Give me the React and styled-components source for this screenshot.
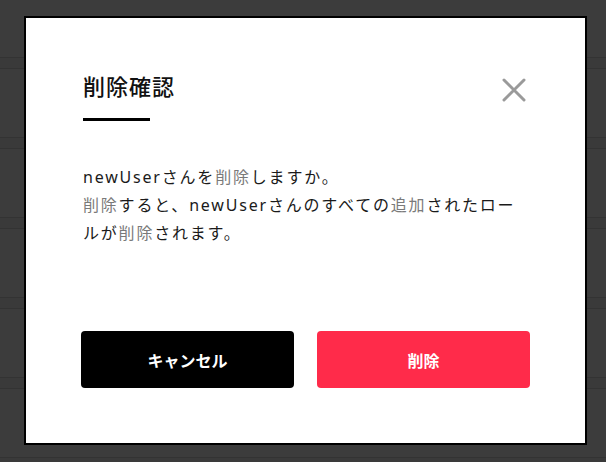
import React from "react";
import styled, { createGlobalStyle } from "styled-components";

const GlobalStyle = createGlobalStyle`
  html, body {
    margin: 0;
    padding: 0;
    background: #3c3c3c;
    font-family: "Noto Sans", "Noto Sans CJK JP", sans-serif;
  }
`;

const rows = [0, 1, 2, 3, 4, 5];

const App = () => {
  return (
    <>
      <GlobalStyle />
      <StPage>
        <StSpacer />
        {rows.map((r) => (
          <StRow key={r}>
            <StRowHead />
            <StRowBody />
          </StRow>
        ))}
      </StPage>

      <StOverlay>
        <StModal>
          <StHeader>
            <StTitleWrap>
              <StTitle>削除確認</StTitle>
              <StTitleLine />
            </StTitleWrap>
            <StClose aria-label="close">
              <svg width="28" height="28" viewBox="0 0 28 28">
                <path
                  d="M4 4 L24 24 M24 4 L4 24"
                  stroke="#9a9a9a"
                  strokeWidth="3"
                  strokeLinecap="round"
                  fill="none"
                />
              </svg>
            </StClose>
          </StHeader>

          <StMessage>
            newUserさんを<StKanji>削除</StKanji>しますか。
            <br />
            <StKanji>削除</StKanji>すると、newUserさんのすべての<StKanji>追加</StKanji>されたロールが<StKanji>削除</StKanji>されます。
          </StMessage>

          <StBtnRow>
            <StBtn>キャンセル</StBtn>
            <StBtn danger>削除</StBtn>
          </StBtnRow>
        </StModal>
      </StOverlay>
    </>
  );
};

const StPage = styled.div`
  display: flex;
  flex-direction: column;
  height: 462px;
  overflow: hidden;
`;

const StSpacer = styled.div`
  height: 57px;
  flex-shrink: 0;
`;

const StRow = styled.div`
  flex-shrink: 0;
  border-top: 1px solid #333333;
`;

const StRowHead = styled.div`
  height: 10px;
  background: #3a3a3a;
  border-bottom: 1px solid #333333;
`;

const StRowBody = styled.div`
  height: 68px;
`;

const StOverlay = styled.div`
  position: fixed;
  inset: 0;
  padding: 16px 0 0 24px;
`;

const StModal = styled.div`
  box-sizing: border-box;
  width: 563px;
  height: 429px;
  background: #ffffff;
  border: 2px solid #000000;
  padding: 57px 57px 0 57px;
  display: flex;
  flex-direction: column;
`;

const StHeader = styled.div`
  display: flex;
  justify-content: space-between;
  align-items: flex-start;
`;

const StTitleWrap = styled.div`
  display: flex;
  flex-direction: column;
`;

const StTitle = styled.h2`
  margin: 0;
  font-size: 22px;
  font-weight: 500;
  letter-spacing: 1px;
  line-height: 22px;
  color: #111111;
`;

const StTitleLine = styled.div`
  width: 67px;
  height: 3px;
  background: #000000;
  margin-top: 21px;
`;

const StClose = styled.button`
  border: none;
  background: none;
  padding: 0;
  margin-top: 1px;
  width: 28px;
  height: 28px;
  cursor: pointer;
  display: flex;
`;

const StMessage = styled.p`
  margin: 42px 0 0 0;
  max-width: 440px;
  font-size: 16px;
  line-height: 28px;
  letter-spacing: 1.8px;
  color: #1a1a1a;
`;

const StKanji = styled.span`
  color: #7a7a7a;
`;

const StBtnRow = styled.div`
  display: flex;
  justify-content: center;
  gap: 23px;
  margin: 84px -30px 0 -30px;
`;

const StBtn = styled.button`
  width: 213px;
  height: 57px;
  border: none;
  border-radius: 4px;
  background: ${(p) => (p.danger ? "#ff2b4a" : "#000000")};
  color: #ffffff;
  font-family: "Noto Sans", "Noto Sans CJK JP", sans-serif;
  font-size: 16px;
  font-weight: 700;
  cursor: pointer;
`;

export default App;
